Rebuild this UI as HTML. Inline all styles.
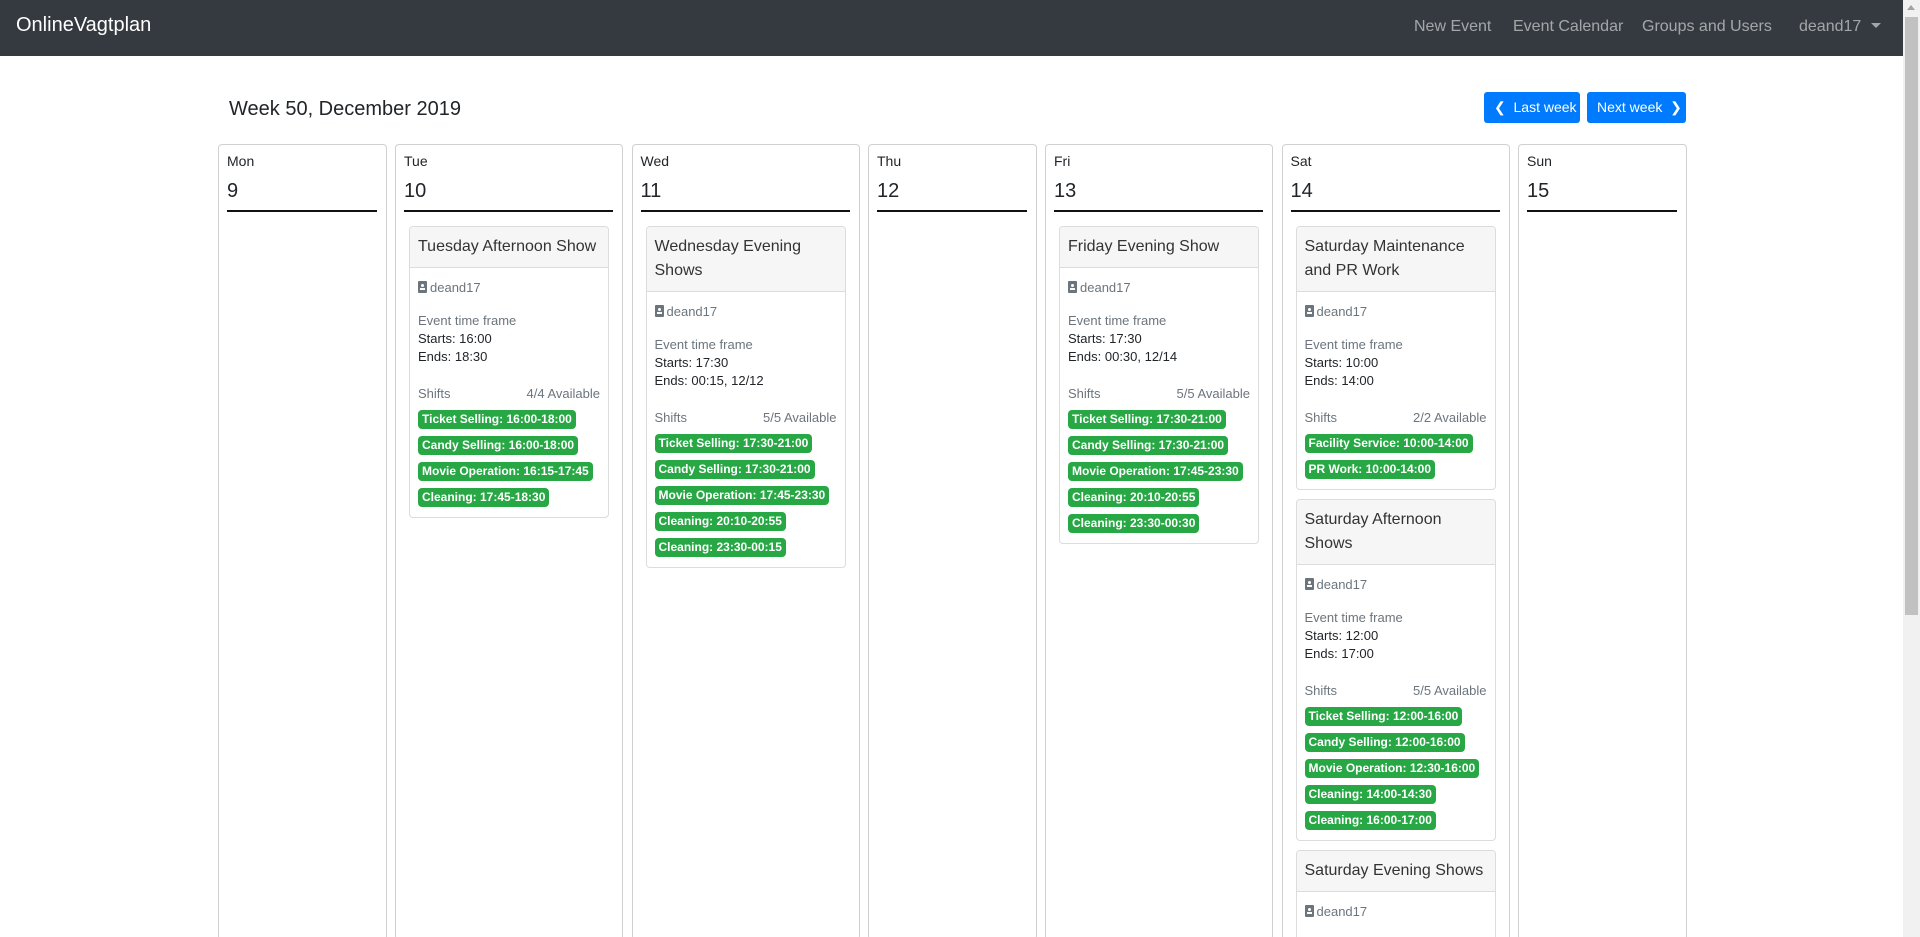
<!DOCTYPE html>
<html><head><meta charset="utf-8"><style>
*{box-sizing:border-box;margin:0;padding:0}
html,body{width:1920px;height:937px;overflow:hidden;background:#fff;font-family:"Liberation Sans",sans-serif;color:#212529}
#wrap{position:relative;width:1920px;height:937px;overflow:hidden}
.nav{position:absolute;left:0;top:0;width:1903px;height:56px;background:#343a40}
.brand{position:absolute;left:16px;top:14px;font-size:20px;color:#fff}
.nl{position:absolute;top:18px;font-size:16px;color:rgba(255,255,255,.55)}
.sb{position:absolute;left:1903px;top:0;width:17px;height:937px;background:#f1f1f1}
.sb .th{position:absolute;left:2px;top:17px;width:13px;height:598px;background:#c1c1c1}
.sb .ar{position:absolute;left:4px;top:5px;border:4px solid transparent;border-bottom:5px solid #a3a3a3;border-top:0}
h5{position:absolute;left:229px;top:98px;font-size:20px;font-weight:400}
.btn{position:absolute;top:92px;height:31px;background:#007bff;color:#fff;border-radius:3px;font-size:14px;line-height:31px;padding-left:10px}
.cols{position:absolute;left:218px;top:144px;display:flex;gap:8.5px}
.col{border:1px solid #d0d0d0;border-radius:4px;height:796px;padding:0 9px 0 8px;position:relative;overflow:hidden}
.n{width:168.5px}.w{width:228px}
.dn{font-size:14px;margin-top:8px;line-height:17px}
.dd{font-size:20px;margin-top:9px;line-height:24px;padding-bottom:7px;border-bottom:2.5px solid #111}
.card{border:1px solid #dcdcdc;border-radius:4px;margin:14px 4px 0 5px;overflow:hidden}
.card+.card{margin-top:9px}
.ch{background:#f6f6f6;border-bottom:1px solid #dcdcdc;padding:8px 8px;font-size:16px;line-height:24px;color:#333}
.cb{padding:11px 8px 10px;font-size:13px;line-height:18px}
.g{color:#6c757d}
.ic{display:inline-block;width:9px;height:12px;background:#6c757d;border-radius:1px;vertical-align:-1px;margin-right:3px;position:relative}
.ic:after{content:"";position:absolute;left:3px;top:3px;width:3px;height:3px;background:#fff;border-radius:50%}
.ic:before{content:"";position:absolute;left:2px;top:7px;width:5px;height:2px;background:#fff}
.tf{margin-top:15px}
.sh{margin-top:19px;display:flex;justify-content:space-between}
.b{display:block;width:max-content;background:#28a745;color:#fff;font-weight:bold;font-size:12px;line-height:19px;height:19px;padding:0 4px;border-radius:4px;margin-top:7px}
</style></head><body><div id="wrap">
<div class="nav"><div class="brand">OnlineVagtplan</div>
<span class="nl" style="left:1414px">New Event</span><span class="nl" style="left:1513px">Event Calendar</span><span class="nl" style="left:1642px">Groups and Users</span><span class="nl" style="left:1799px">deand17 <span style="display:inline-block;border:5px solid transparent;border-top:5px solid rgba(255,255,255,.55);border-bottom:0;vertical-align:3px;margin-left:5px"></span></span></div>
<div class="sb"><div class="ar"></div><div class="th"></div></div>
<h5>Week 50, December 2019</h5>
<div class="btn" style="left:1484px;width:96px">&#10094;&nbsp; Last week</div>
<div class="btn" style="left:1587px;width:99px">Next week &nbsp;&#10095;</div>
<div class="cols">
<div class="col n"><div class="dn">Mon</div><div class="dd">9</div></div>
<div class="col w"><div class="dn">Tue</div><div class="dd">10</div>
<div class="card"><div class="ch">Tuesday Afternoon Show</div><div class="cb"><div class="g"><span class="ic"></span>deand17</div><div class="g tf">Event time frame</div><div>Starts: 16:00</div><div>Ends: 18:30</div><div class="g sh"><span>Shifts</span><span>4/4 Available</span></div>
<span class="b">Ticket Selling: 16:00-18:00</span><span class="b">Candy Selling: 16:00-18:00</span><span class="b">Movie Operation: 16:15-17:45</span><span class="b">Cleaning: 17:45-18:30</span></div></div></div>
<div class="col w"><div class="dn">Wed</div><div class="dd">11</div>
<div class="card"><div class="ch">Wednesday Evening<br>Shows</div><div class="cb"><div class="g"><span class="ic"></span>deand17</div><div class="g tf">Event time frame</div><div>Starts: 17:30</div><div>Ends: 00:15, 12/12</div><div class="g sh"><span>Shifts</span><span>5/5 Available</span></div>
<span class="b">Ticket Selling: 17:30-21:00</span><span class="b">Candy Selling: 17:30-21:00</span><span class="b">Movie Operation: 17:45-23:30</span><span class="b">Cleaning: 20:10-20:55</span><span class="b">Cleaning: 23:30-00:15</span></div></div></div>
<div class="col n"><div class="dn">Thu</div><div class="dd">12</div></div>
<div class="col w"><div class="dn">Fri</div><div class="dd">13</div>
<div class="card"><div class="ch">Friday Evening Show</div><div class="cb"><div class="g"><span class="ic"></span>deand17</div><div class="g tf">Event time frame</div><div>Starts: 17:30</div><div>Ends: 00:30, 12/14</div><div class="g sh"><span>Shifts</span><span>5/5 Available</span></div>
<span class="b">Ticket Selling: 17:30-21:00</span><span class="b">Candy Selling: 17:30-21:00</span><span class="b">Movie Operation: 17:45-23:30</span><span class="b">Cleaning: 20:10-20:55</span><span class="b">Cleaning: 23:30-00:30</span></div></div></div>
<div class="col w"><div class="dn">Sat</div><div class="dd">14</div>
<div class="card"><div class="ch">Saturday Maintenance<br>and PR Work</div><div class="cb"><div class="g"><span class="ic"></span>deand17</div><div class="g tf">Event time frame</div><div>Starts: 10:00</div><div>Ends: 14:00</div><div class="g sh"><span>Shifts</span><span>2/2 Available</span></div>
<span class="b">Facility Service: 10:00-14:00</span><span class="b">PR Work: 10:00-14:00</span></div></div>
<div class="card"><div class="ch">Saturday Afternoon<br>Shows</div><div class="cb"><div class="g"><span class="ic"></span>deand17</div><div class="g tf">Event time frame</div><div>Starts: 12:00</div><div>Ends: 17:00</div><div class="g sh"><span>Shifts</span><span>5/5 Available</span></div>
<span class="b">Ticket Selling: 12:00-16:00</span><span class="b">Candy Selling: 12:00-16:00</span><span class="b">Movie Operation: 12:30-16:00</span><span class="b">Cleaning: 14:00-14:30</span><span class="b">Cleaning: 16:00-17:00</span></div></div>
<div class="card"><div class="ch">Saturday Evening Shows</div><div class="cb"><div class="g"><span class="ic"></span>deand17</div><div class="g tf">Event time frame</div><div>Starts: 17:30</div></div></div></div>
<div class="col n"><div class="dn">Sun</div><div class="dd">15</div></div>
</div>
</div></body></html>
